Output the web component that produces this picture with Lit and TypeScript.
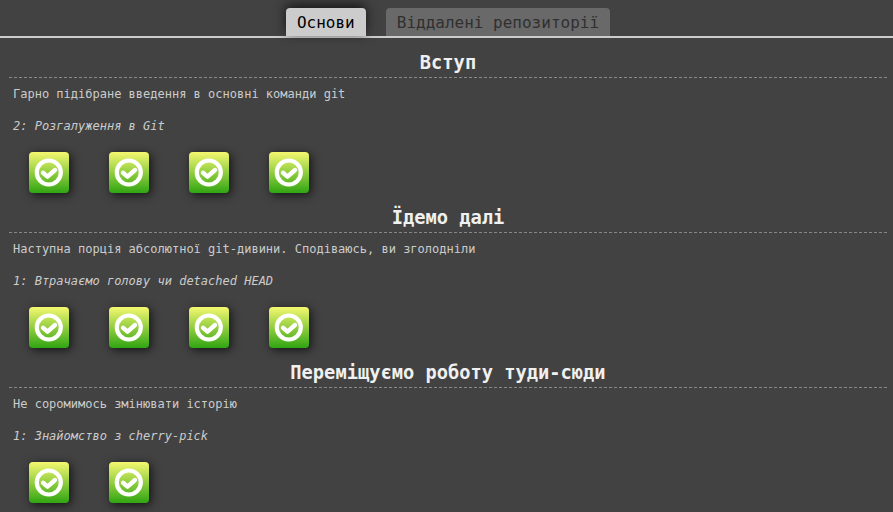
import { LitElement, html, css } from "lit";
import { customElement, property } from "lit/decorators.js";

interface Sequence {
  title: string;
  about: string;
  level: string;
  count: number;
}

const SEQUENCES: Sequence[] = [
  {
    title: "Вступ",
    about: "Гарно підібране введення в основні команди git",
    level: "2: Розгалуження в Git",
    count: 4,
  },
  {
    title: "Їдемо далі",
    about: "Наступна порція абсолютної git-дивини. Сподіваюсь, ви зголодніли",
    level: "1: Втрачаємо голову чи detached HEAD",
    count: 4,
  },
  {
    title: "Переміщуємо роботу туди-сюди",
    about: "Не соромимось змінювати історію",
    level: "1: Знайомство з cherry-pick",
    count: 2,
  },
];

@customElement("level-icon")
export class LevelIcon extends LitElement {
  static styles = css`
    :host {
      display: block;
      box-sizing: border-box;
      width: 40px;
      height: 41px;
      border-radius: 4px;
      background: linear-gradient(#f5f870, #30a512);
      box-shadow: 2px 2px 10px rgba(0, 0, 0, 0.7);
    }
    .mark {
      display: block;
      width: 40px;
      height: 41px;
    }
  `;

  render() {
    return html`<svg class="mark" viewBox="0 0 40 41" fill="none" stroke="#fff">
      <circle cx="19.8" cy="20.5" r="12" stroke-width="4.2" />
      <path
        d="M14 20.8 L18.5 24.6 L26 18"
        stroke-width="4.4"
        stroke-linecap="round"
        stroke-linejoin="round"
      />
    </svg>`;
  }
}

@customElement("level-sequence")
export class LevelSequence extends LitElement {
  @property({ attribute: false }) sequence!: Sequence;

  static styles = css`
    :host {
      display: block;
      height: 155px;
    }
    .title {
      box-sizing: border-box;
      height: 29px;
      margin: 0;
      border-bottom: 1px dashed #888;
      color: #f0f0f0;
      font-size: 18.72px;
      font-weight: bold;
      line-height: 28px;
      text-align: center;
    }
    .text {
      margin: 0;
      padding: 8px 4px;
      line-height: 16px;
    }
    .level {
      font-style: italic;
    }
    .icons {
      display: flex;
      gap: 40px;
      padding: 10px 20px 0;
    }
  `;

  render() {
    const { title, about, level, count } = this.sequence;
    return html`
      <h3 class="title">${title}</h3>
      <p class="text">${about}</p>
      <p class="text level">${level}</p>
      <div class="icons">
        ${Array.from({ length: count }, () => html`<level-icon></level-icon>`)}
      </div>
    `;
  }
}

@customElement("app-root")
export class AppRoot extends LitElement {
  static styles = css`
    :host {
      display: block;
      box-sizing: border-box;
      height: 512px;
      overflow: hidden;
      background: #424242;
      color: #ccc;
      font-family: "DejaVu Sans Mono", monospace;
      font-size: 12px;
    }
    .tabs {
      display: flex;
      justify-content: center;
      gap: 20px;
      box-sizing: border-box;
      height: 38px;
      padding: 8px 0 0 3px;
      border-bottom: 2px solid #ccc;
    }
    .tab {
      box-sizing: border-box;
      height: 28px;
      padding: 1px 11px 0;
      border-radius: 4px 4px 0 0;
      background: #696969;
      color: #303030;
      font-size: 16px;
      line-height: 28px;
      white-space: nowrap;
    }
    .tab.active {
      background: #ccc;
      color: #000;
      box-shadow: 0 -3px 12px rgba(0, 0, 0, 0.7);
    }
    .list {
      padding: 11px 6px 0 9px;
    }
  `;

  render() {
    return html`
      <nav class="tabs">
        <div class="tab active">Основи</div>
        <div class="tab">Віддалені репозиторії</div>
      </nav>
      <main class="list">
        ${SEQUENCES.map(
          (s) => html`<level-sequence .sequence=${s}></level-sequence>`
        )}
      </main>
    `;
  }
}
